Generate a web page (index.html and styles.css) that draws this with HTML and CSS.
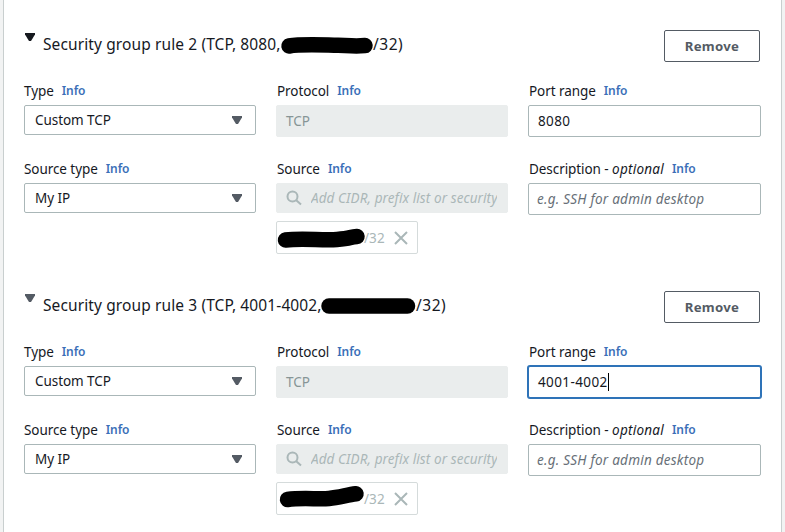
FILE: index.html
```
<!DOCTYPE html>
<html lang="en">
<head>
<meta charset="utf-8">
<title>Security group rules</title>
<link rel="stylesheet" href="styles.css">
</head>
<body>
<main class="panel">
  <section class="rule">
    <header class="rule-header">
      <svg class="toggle toggle-active" viewBox="0 0 10 8"><path d="M0 0H10V1.5L6 8H4L0 1.5Z"/></svg>
      <h2 class="title"><span class="title-first">Security group rule 2 (TCP, 8080,</span><svg class="mark mark-title" viewBox="0 0 92 18"><path d="M8 9C20 7 40 8 57 8.3S72 9.5 84 8.6"/></svg><span>/32)</span></h2>
      <button class="remove">Remove</button>
    </header>
    <div class="fields">
      <div class="field">
        <div class="label"><span>Type</span><a class="info">Info</a></div>
        <div class="box select"><span>Custom TCP</span><svg class="caret" viewBox="0 0 10 8"><path d="M0 0H10V1.5L6 8H4L0 1.5Z"/></svg></div>
      </div>
      <div class="field">
        <div class="label"><span>Protocol</span><a class="info">Info</a></div>
        <div class="box input disabled">TCP</div>
      </div>
      <div class="field">
        <div class="label"><span>Port range</span><a class="info">Info</a></div>
        <div class="box input"><span class="number">8080</span></div>
      </div>
      <div class="field">
        <div class="label"><span>Source type</span><a class="info">Info</a></div>
        <div class="box select"><span>My IP</span><svg class="caret" viewBox="0 0 10 8"><path d="M0 0H10V1.5L6 8H4L0 1.5Z"/></svg></div>
      </div>
      <div class="field">
        <div class="label"><span>Source</span><a class="info">Info</a></div>
        <div class="box search"><svg class="lens" viewBox="0 0 16 16"><circle cx="6.5" cy="6.5" r="5"/><path d="M10 10L15 14.5"/></svg><span class="hint">Add CIDR, prefix list or security</span></div>
        <div class="token"><svg class="mark mark-token" viewBox="0 0 88 33"><path d="M8.5 19C25 17 45 19.500 60 18.500S72 16 80 15.500"/></svg><span>/32</span><svg class="close" viewBox="0 0 14 14"><path d="M1 1L13 13M13 1L1 13"/></svg></div>
      </div>
      <div class="field">
        <div class="label"><span>Description - <i>optional</i></span><a class="info">Info</a></div>
        <div class="box input"><span class="placeholder">e.g. SSH for admin desktop</span></div>
      </div>
    </div>
  </section>

  <section class="rule">
    <header class="rule-header">
      <svg class="toggle" viewBox="0 0 10 8"><path d="M0 0H10V1.5L6 8H4L0 1.5Z"/></svg>
      <h2 class="title"><span class="title-second">Security group rule 3 (TCP, 4001-4002,</span><svg class="mark mark-title mark-straight" viewBox="0 0 94 18"><path d="M7 9H85.500"/></svg><span>/32)</span></h2>
      <button class="remove">Remove</button>
    </header>
    <div class="fields">
      <div class="field">
        <div class="label"><span>Type</span><a class="info">Info</a></div>
        <div class="box select"><span>Custom TCP</span><svg class="caret" viewBox="0 0 10 8"><path d="M0 0H10V1.5L6 8H4L0 1.5Z"/></svg></div>
      </div>
      <div class="field">
        <div class="label"><span>Protocol</span><a class="info">Info</a></div>
        <div class="box input disabled">TCP</div>
      </div>
      <div class="field">
        <div class="label"><span>Port range</span><a class="info">Info</a></div>
        <div class="box input focused"><span class="number">4001-4002</span><span class="cursor"></span></div>
      </div>
      <div class="field">
        <div class="label"><span>Source type</span><a class="info">Info</a></div>
        <div class="box select"><span>My IP</span><svg class="caret" viewBox="0 0 10 8"><path d="M0 0H10V1.5L6 8H4L0 1.5Z"/></svg></div>
      </div>
      <div class="field">
        <div class="label"><span>Source</span><a class="info">Info</a></div>
        <div class="box search"><svg class="lens" viewBox="0 0 16 16"><circle cx="6.5" cy="6.5" r="5"/><path d="M10 10L15 14.5"/></svg><span class="hint">Add CIDR, prefix list or security</span></div>
        <div class="token"><svg class="mark mark-token" viewBox="0 0 88 33"><path d="M10.500 17.500C25 15.500 42 17.500 52 16.500S70 13 79 11.800"/></svg><span>/32</span><svg class="close" viewBox="0 0 14 14"><path d="M1 1L13 13M13 1L1 13"/></svg></div>
      </div>
      <div class="field">
        <div class="label"><span>Description - <i>optional</i></span><a class="info">Info</a></div>
        <div class="box input"><span class="placeholder">e.g. SSH for admin desktop</span></div>
      </div>
    </div>
  </section>
</main>
</body>
</html>
```
FILE: styles.css
```
* { box-sizing: border-box; }
body {
  margin: 0;
  height: 532px;
  overflow: hidden;
  background: #f2f3f3;
  color: #16191f;
  font: 13.5px/22px "Noto Sans", "Open Sans", sans-serif;
  letter-spacing: -0.07px;
}
svg { display: block; flex: none; }
.panel {
  width: 779px;
  height: 532px;
  margin-left: 3px;
  padding: 30px 20px 0;
  border: solid #c9cfcf;
  border-width: 0 1px;
  background: #fff;
  overflow: hidden;
}
.rule { margin-bottom: 37px; }
.rule-header {
  display: flex;
  align-items: flex-start;
  height: 32px;
  margin-bottom: 18px;
}
.toggle, .caret { width: 10px; height: 8px; fill: #545b64; }
.toggle { margin: 3px 8px 0 1px; }
.toggle-active { fill: #16191f; }
.title {
  display: flex;
  flex: 1;
  align-items: center;
  margin: 3px 0 0;
  font-size: 15.5px;
  font-weight: 400;
  line-height: 22px;
  letter-spacing: 0.11px;
  white-space: nowrap;
}
.title-first { width: 238px; }
.title-second { width: 279px; }
.title span:last-child { letter-spacing: 0.5px; }
.mark { fill: none; stroke: #000; stroke-width: 15.5; stroke-linecap: round; overflow: visible; }
.mark-title { width: 92px; height: 18px; margin-top: 3px; }
.mark-straight { width: 94px; margin-top: 1px; }
.mark-token { width: 88px; height: 33px; }
.remove {
  width: 96px;
  height: 32px;
  margin-right: 1px;
  padding: 0;
  border: 1px solid #545b64;
  border-radius: 2px;
  background: #fff;
  color: #545b64;
  font: 700 13.2px/22px "Noto Sans", sans-serif;
  letter-spacing: 0.3px;
}
.fields {
  display: grid;
  grid-template-columns: 232px 232px 233px;
  gap: 20px;
}
.label { display: flex; gap: 8px; margin-bottom: 3px; white-space: nowrap; }
.field:nth-child(n + 4) .label { padding-top: 1px; }
.field:not(:nth-child(3n + 1)) .label { padding-left: 1px; }
.label i { letter-spacing: 0.25px; }
.info { color: #3b6fb8; font-size: 12px; font-weight: 600; letter-spacing: -0.1px; }
.box {
  display: flex;
  align-items: center;
  border: 1px solid #aab7b8;
  border-radius: 2px;
  background: #fff;
  white-space: nowrap;
}
.select { justify-content: space-between; height: 30px; padding: 0 13px 0 10px; }
.input { height: 32px; padding: 0 8px 0 9px; }
.disabled { border-color: #eaeded; background: #eaeded; color: #879596; }
.number { letter-spacing: 0.4px; }
.focused { border-color: #2e73b8; box-shadow: 0 0 0 1px #2e73b8; }
.cursor { width: 1px; height: 18px; background: #000; }
.placeholder { margin-left: -1px; color: #687078; font-style: italic; letter-spacing: 0.24px; }
.search { height: 30px; padding: 0 10px; border-color: #eaeded; background: #eaeded; color: #aab7b8; }
.lens { width: 16px; height: 16px; margin: 0 9px 0 -1px; fill: none; stroke: #aab7b8; stroke-width: 2; }
.hint { flex: 1; overflow: hidden; font-style: italic; letter-spacing: 0.09px; }
.token {
  display: flex;
  align-items: center;
  width: 142px;
  height: 33px;
  margin-top: 8px;
  border: 1px solid #d5dbdb;
  border-radius: 2px;
  color: #aab7b8;
}
.token span { width: 20px; margin-left: -1px; letter-spacing: 0.1px; }
.close { width: 14px; height: 14px; margin-left: 10px; fill: none; stroke: #aab7b8; stroke-width: 2; }
```
